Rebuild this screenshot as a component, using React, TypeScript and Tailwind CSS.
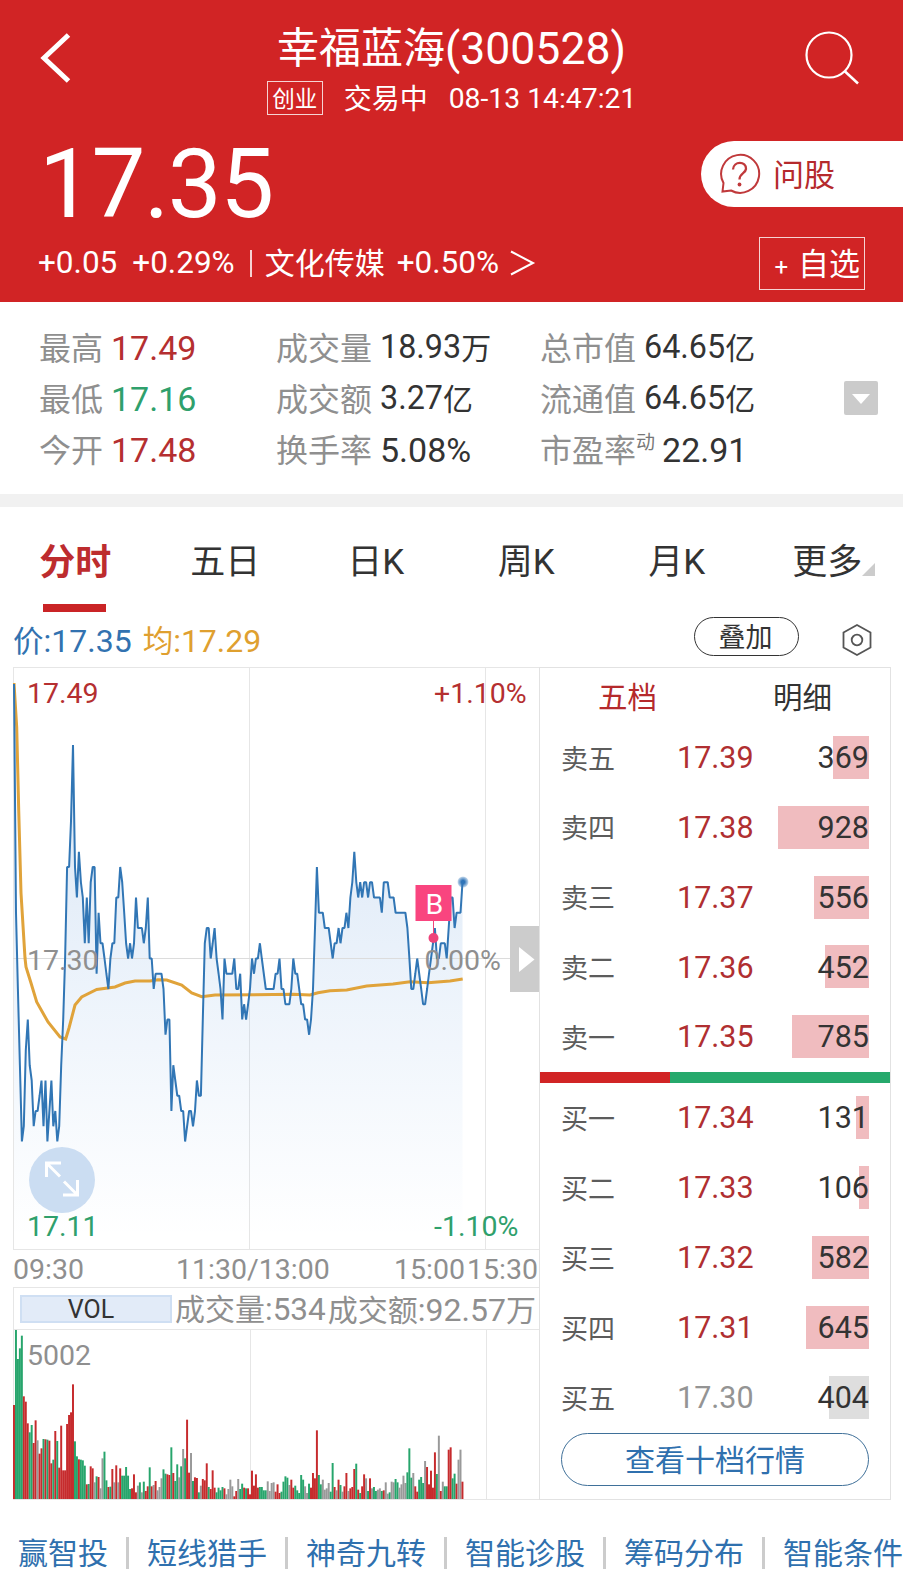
import React from "react";

type Level = {
  label: string;
  price: string;
  amount: number;
  flat?: boolean;
};

const sells: Level[] = [
  { label: "卖五", price: "17.39", amount: 369 },
  { label: "卖四", price: "17.38", amount: 928 },
  { label: "卖三", price: "17.37", amount: 556 },
  { label: "卖二", price: "17.36", amount: 452 },
  { label: "卖一", price: "17.35", amount: 785 },
];

const buys: Level[] = [
  { label: "买一", price: "17.34", amount: 131 },
  { label: "买二", price: "17.33", amount: 106 },
  { label: "买三", price: "17.32", amount: 582 },
  { label: "买四", price: "17.31", amount: 645 },
  { label: "买五", price: "17.30", amount: 404, flat: true },
];

const tabs = ["分时", "五日", "日K", "周K", "月K", "更多"];

const tools = [
  "赢智投",
  "短线猎手",
  "神奇九转",
  "智能诊股",
  "筹码分布",
  "智能条件",
];

// price per minute, in cents above or below the previous close (17.30)
const ticks = [
  18, 3, -2, -7, -12, -11, -6, -4, -7, -8, -11, -10, -10, -9, -8, -11, -8, -12,
  -10, -8, -11, -10, -12, -11, -7, -4, 0, 6, 6, 9, 14, 6, 4, 7, 5, 4, 1, 4, 1,
  5, 6, 6, -1, 3, 1, 1, 0, -1, -2, 0, 1, 1, 4, 4, 6, 5, 3, 1, 0, 1, 0, 1, 4, 2,
  2, 2, 1, 2, 4, 0, 0, -2, -1, -1, -1, -1, -2, -5, -4, -4, -10, -7, -8, -9, -9,
  -10, -10, -12, -11, -10, -10, -11, -10, -8, -9, -9, -4, 1, 2, 2, 0, 1, 2, 0,
  -1, -2, -4, 0, -1, -1, -1, -1, 0, -2, -2, -1, -4, -3, -4, -3, -2, 0, -1, 0, 0,
  1, 0, -1, -2, -2, -2, -2, -2, -1, -1, 0, -2, -2, -3, -3, -3, -2, 0, -1, -1,
  -2, -3, -3, -4, -4, -5, -4, -2, 2, 6, 3, 3, 3, 2, 2, 2, 1, 0, 1, 1, 2, 1, 2,
  2, 3, 2, 4, 5, 7, 5, 4, 5, 4, 5, 5, 4, 5, 5, 4, 4, 4, 4, 3, 5, 5, 5, 4, 4, 4,
  3, 3, 3, 3, 3, 3, 2, 0, -2, -2, -1, 0, -1, -2, -3, -3, -2, -1, 0, 1, 2, 0, 0,
  1, 1, 1, 0, 2, 4, 4, 2, 3, 3, 3, 5,
];

const average =
  "1,16 3.7,60 5.7,143 8,226 12,291 13,300 17.7,315 23.7,335 35,355 47,370 52.7,372 56,361 62,338 68.7,330 83.7,322.5 102,320 112,316 122,314 137,314 145,312.7 153.7,313 168.7,318 178.7,326 188.7,329.7 202,328 280,327.3 297,328 305,325.7 317,323.7 333.7,323 353.7,319 380,317 397,314.7 415,315.7 437,314 449.7,312";

// volume per minute: r = up, g = down, k = unchanged
const volumes =
  "282r 507g 420g 452g 490g 308r 292r 227r 200g 222g 168r 236r 176k 136r 152r 180g 179r 178g 175r 107r 118g 204r 174g 94r 220r 86r 86r 225r 252r 260r 344r 173g 128g 119r 118g 116g 100g 44r 45g 98r 92r 50k 68g 66r 32k 122k 142g 56g 36r 37g 90r 50k 101r 50k 92r 70g 70g 96g 70g 30g 32r 74r 20r 40k 50g 20k 52g 24r 38r 95g 38r 42k 54r 26k 36k 62k 89g 76g 74r 72r 155g 78r 54g 104g 65k 98g 150k 122g 238r 79r 138k 54g 65r 63r 20g 40k 60r 56r 107r 36g 30r 86r 34r 20g 34g 26g 36g 32r 14k 30k 58k 38k 8r 24r 60k 30g 46g 34r 32g 32r 14r 85r 40r 74r 34r 36g 36g 26g 26g 53k 24k 48k 50k 22r 44r 18r 22g 52g 68g 64g 42k 58r 34r 40g 26g 18g 72g 58g 38k 18k 46g 34r 78r 62r 206r 72g 44g 58k 28k 32k 48k 22g 108g 36r 26k 58r 42g 22k 38r 78r 24k 32r 36r 90r 106g 28r 18g 38r 74r 62k 24g 62r 32k 36g 24g 28k 32k 24g 26r 50k 16k 20g 52k 50k 60g 50g 34k 44k 70k 48k 80g 152g 64g 78k 38r 22r 58g 66g 48g 114k 96r 44r 85r 34r 140r 75g 190k 24r 52k 38g 38g 148r 155r 62g 76g 46r 118k 148k 52r".split(
    " "
  );

const volumeColor: Record<string, string> = {
  r: "#c62b2d",
  g: "#27a56c",
  k: "#999999",
};

const MINUTE = 1.967;

const Header = () => {
  return (
    <header className="h-[302px] bg-[#d12425] text-white">
      <div className="flex h-[122px] justify-between">
        <svg width="110" height="122" viewBox="0 0 110 122" fill="none">
          <path d="M68.500 35 L44 58 L68.500 81" stroke="white" strokeWidth="5" />
        </svg>
        <div className="flex flex-col items-center pt-[26px]">
          <h1 className="flex h-[46px] items-center text-[42px] leading-none whitespace-nowrap">
            幸福蓝海<span className="text-[44.5px]">(300528)</span>
          </h1>
          <div className="mt-[9px] flex h-[34px] items-center text-[28px] leading-none whitespace-nowrap">
            <span className="flex h-[34px] w-[56px] items-center justify-center border border-white/80 pt-[3px] text-[22.5px]">
              创业
            </span>
            <span className="mt-[3px] ml-[21px]">交易中</span>
            <span className="mt-[2px] ml-[21px] text-[28.3px]">
              08-13 14:47:21
            </span>
          </div>
        </div>
        <svg width="110" height="122" viewBox="0 0 110 122" fill="none">
          <circle cx="36" cy="55" r="22.500" stroke="white" strokeWidth="2.200" />
          <path d="M51.500 71 L65 83.500" stroke="white" strokeWidth="2.500" />
        </svg>
      </div>

      <div className="flex h-[108px] justify-between">
        <span className="pt-[14px] pl-[39px] text-[96px] leading-none tracking-[-1.5px]">
          17.35
        </span>
        <button className="mt-[19px] flex h-[66px] w-[202px] items-center rounded-l-full bg-white pl-[18px] text-[31px] leading-none text-[#b52a2c]">
          <svg width="42" height="42" viewBox="0 0 42 42" fill="none">
            <path
              d="M4.500 30 A19 19 0 1 1 12 37.500 L3.500 38.500 Z"
              stroke="#c0393b"
              strokeWidth="2"
            />
            <path
              d="M14 16.500 C14.500 7.500 27.500 8 27 16 C26.500 20.500 20.500 20 20.500 26.500"
              stroke="#c0393b"
              strokeWidth="2.300"
            />
            <circle cx="20.500" cy="31.500" r="1.900" fill="#c0393b" />
          </svg>
          <span className="mt-[3px] ml-[12px]">问股</span>
        </button>
      </div>

      <div className="flex h-[66px] items-center justify-between pr-[38px] pl-[38px] text-[31.5px] leading-none whitespace-nowrap">
        <div className="flex items-center">
          <span>+0.05</span>
          <span className="ml-[15px]">+0.29%</span>
          <span className="ml-[15px] h-[27px] w-[2px] bg-white/80" />
          <span className="mt-[2px] ml-[13px] text-[30px]">文化传媒</span>
          <span className="ml-[12px]">+0.50%</span>
          <svg className="ml-[11px]" width="26" height="28" fill="none">
            <path d="M1 2.500 L23 14 L1 25.500" stroke="white" strokeWidth="2" />
          </svg>
        </div>
        <button className="flex h-[53px] w-[106px] items-center justify-end border border-white/80 pr-[4px] text-[31px]">
          <span className="mt-[8px] mr-[10px] text-[24px]">+</span>
          <span className="mt-[2px]">自选</span>
        </button>
      </div>
    </header>
  );
};

type StatProps = {
  label: string;
  value: string;
  unit?: string;
  mark?: string;
  color?: string;
};

const Stat = ({ label, value, unit, mark, color }: StatProps) => {
  return (
    <div className="flex h-[51px] items-center whitespace-nowrap">
      <span className="mt-[2px] text-[32px] text-[#8f8f8f]">{label}</span>
      {mark && (
        <span className="mb-[15px] -mr-[1px] text-[19px] text-[#777]">
          {mark}
        </span>
      )}
      {unit ? (
        <>
          <span className="ml-[8px] text-[32.3px] text-[#333]">{value}</span>
          <span className="mt-[2px] text-[30px] text-[#333]">{unit}</span>
        </>
      ) : (
        <span className={`ml-[8px] text-[34px] ${color ?? "text-[#333]"}`}>
          {value}
        </span>
      )}
    </div>
  );
};

const Stats = () => {
  return (
    <section className="flex h-[192px] pt-[20px] pl-[39px] leading-none">
      <div className="w-[237px]">
        <Stat label="最高" value="17.49" color="text-[#b52f30]" />
        <Stat label="最低" value="17.16" color="text-[#2fa06c]" />
        <Stat label="今开" value="17.48" color="text-[#b52f30]" />
      </div>
      <div className="w-[264px]">
        <Stat label="成交量" value="18.93" unit="万" />
        <Stat label="成交额" value="3.27" unit="亿" />
        <Stat label="换手率" value="5.08%" />
      </div>
      <div className="w-[304px]">
        <Stat label="总市值" value="64.65" unit="亿" />
        <Stat label="流通值" value="64.65" unit="亿" />
        <Stat label="市盈率" mark="动" value="22.91" />
      </div>
      <button className="mt-[59px] h-[34px] w-[34px] rounded-[2px] bg-[#cbcbcb]">
        <svg width="34" height="34" viewBox="0 0 34 34">
          <path d="M8 13 H26 L17 23 Z" fill="white" />
        </svg>
      </button>
    </section>
  );
};

const Tabs = () => {
  return (
    <nav className="flex h-[105px] text-[35px] leading-none text-[#333]">
      {tabs.map((tab, i) => (
        <div
          key={tab}
          className="flex flex-1 flex-col items-center justify-between pt-[38px]"
        >
          {i === 0 ? (
            <>
              <span className="text-[36px] font-bold text-[#bd2c2e]">
                {tab}
              </span>
              <span className="mr-[2px] h-[8px] w-[63px] bg-[#ca2426]" />
            </>
          ) : (
            <span className="relative -ml-[1px]">
              {tab}
              {tab === "更多" && (
                <svg
                  className="absolute right-[-13px] bottom-[4px]"
                  width="13"
                  height="13"
                >
                  <path d="M13 0 V13 H0 Z" fill="#cccccc" />
                </svg>
              )}
            </span>
          )}
        </div>
      ))}
    </nav>
  );
};

const PriceBar = () => {
  return (
    <div className="flex h-[55px] items-center pr-[31px] pl-[13px] text-[30.5px] leading-none">
      <span className="mt-[3px] text-[#3272b0]">
        价<span className="text-[32px]">:17.35</span>
      </span>
      <span className="mt-[3px] ml-[11px] text-[#dfa02f]">
        均<span className="text-[32px]">:17.29</span>
      </span>
      <button className="mr-[43px] mb-[6px] ml-auto flex h-[39px] w-[105px] items-center justify-center rounded-full border border-[#333] pt-[4px] pr-[2px] text-[27px] text-[#333]">
        叠加
      </button>
      <svg width="30" height="34" viewBox="0 0 30 34" fill="none">
        <path
          d="M15 2 L28.500 9.500 V24.500 L15 32 L1.500 24.500 V9.500 Z"
          stroke="#555"
          strokeWidth="1.800"
        />
        <circle cx="15" cy="17" r="5.300" stroke="#555" strokeWidth="1.800" />
      </svg>
    </div>
  );
};

const PriceChart = () => {
  const points = ticks
    .map((t, i) => `${(1 + i * MINUTE).toFixed(1)},${291.5 - t * 15.25}`)
    .join(" ");

  return (
    <svg
      width="526"
      height="583"
      viewBox="0 0 526 583"
      fill="none"
      className="block text-[28.5px]"
    >
      <defs>
        <linearGradient
          id="area"
          gradientUnits="userSpaceOnUse"
          x1="0"
          y1="16"
          x2="0"
          y2="570"
        >
          <stop offset="0" stopColor="#3a7cc8" stopOpacity="0.22" />
          <stop offset="1" stopColor="#4a90e0" stopOpacity="0" />
        </linearGradient>
        <radialGradient id="pulse">
          <stop offset="0.3" stopColor="#2f74b8" />
          <stop offset="1" stopColor="#2f74b8" stopOpacity="0.25" />
        </radialGradient>
      </defs>
      <path d="M0 0.500 H526 M0 582.500 H526 M0.500 0 V583" stroke="#e6e6e6" />
      <path d="M236.500 0 V583 M472.500 0 V583" stroke="#e6e6e6" />
      <polygon points={`1,582 ${points} 449.5,582`} fill="url(#area)" />
      <path d="M0 291.500 H526" stroke="#dcdcdc" />
      <polyline points={average} stroke="#e0a33a" strokeWidth="3" />
      <polyline
        points={points}
        stroke="#3176b5"
        strokeWidth="2"
        strokeLinejoin="bevel"
      />
      <circle cx="450" cy="215" r="5.500" fill="url(#pulse)" />

      <path d="M420.500 254 V270" stroke="#f0437a" />
      <circle cx="420.500" cy="271" r="5" fill="#ee437a" />
      <rect x="402.500" y="218" width="36" height="36" fill="#f9457f" />
      <text x="421.500" y="247" fill="white" textAnchor="middle">
        B
      </text>

      <text x="14" y="36" fill="#b52f30">
        17.49
      </text>
      <text x="14" y="303" fill="#8f8f8f">
        17.30
      </text>
      <text x="14" y="569" fill="#2fa06c">
        17.11
      </text>
      <text x="421" y="36" fill="#b52f30">
        +1.10%
      </text>
      <text x="411.500" y="303" fill="#8f8f8f">
        0.00%
      </text>
      <text x="421" y="569" fill="#2fa06c">
        -1.10%
      </text>

      <circle cx="49" cy="513" r="33" fill="#cbddf2" />
      <path
        d="M33.500 510 V496 H48 M33.500 496 L47 509.500 M51 514.500 L64.500 528 M64.500 513 V528 H50"
        stroke="white"
        strokeWidth="3"
      />

      <rect x="497" y="259" width="29" height="66" fill="#cccccc" />
      <path d="M506 280 L521.500 292.500 L506 305 Z" fill="white" />
    </svg>
  );
};

const VolumeChart = () => {
  return (
    <svg width="526" height="171" viewBox="0 0 526 171" className="block">
      <path
        d="M0 0.500 H526 M0 170.500 H526 M0.500 0 V171 M237.500 0 V171 M473.500 0 V171"
        stroke="#e6e6e6"
      />
      {volumes.map((v, i) => {
        const height = parseInt(v) / 3;
        return (
          <rect
            key={i}
            x={i * MINUTE}
            y={170 - height}
            width={MINUTE}
            height={height}
            fill={volumeColor[v.slice(-1)]}
          />
        );
      })}
      <text x="14" y="36" fontSize="28.500" fill="#8f8f8f">
        5002
      </text>
    </svg>
  );
};

const Charts = () => {
  return (
    <div className="w-[526px] leading-none whitespace-nowrap text-[#8f8f8f]">
      <PriceChart />
      <div className="flex h-[37px] items-center pt-[3px] text-[28.5px]">
        <span className="w-[163px]">09:30</span>
        <span className="w-[218px]">11:30/13:00</span>
        <span className="w-[73px]">15:00</span>
        <span>15:30</span>
      </div>
      <div className="flex h-[42px] items-center border-t border-l border-[#e6e6e6] pl-[6px] text-[30px]">
        <div className="flex h-[28px] w-[152px] items-center justify-center border-2 border-[#cfdff3] bg-[#e2ebf8] pt-[2px] pr-[10px] text-[25px] text-[#333]">
          VOL
        </div>
        <span className="mt-[2px] ml-[3px]">
          成交量<span className="text-[31.5px]">:534</span>
        </span>
        <span className="mt-[2px] ml-[2px]">
          成交额<span className="text-[32px]">:92.57</span>万
        </span>
      </div>
      <VolumeChart />
    </div>
  );
};

const LevelRow = ({ label, price, amount, flat }: Level) => {
  return (
    <div className="flex h-[43px] items-center pr-[21px] pl-[21px] text-[30.5px]">
      <span className="mt-[5px] w-[116px] text-[27px] text-[#5c5c5c]">
        {label}
      </span>
      <span
        className={`mt-[2px] ${flat ? "text-[#949494]" : "text-[#b02f31]"}`}
      >
        {price}
      </span>
      <span className="relative ml-auto flex h-[43px] items-center text-[#333]">
        <span
          className={`absolute right-0 h-full ${
            flat ? "bg-[#dedede]" : "bg-[#f0bcbf]"
          }`}
          style={{ width: amount * 0.0981 }}
        />
        <span className="relative mt-[2px]">{amount}</span>
      </span>
    </div>
  );
};

const OrderBook = () => {
  return (
    <div className="flex w-[352px] flex-col border border-[#e2e2e2] leading-none">
      <div className="flex h-[58px] items-center pt-[3px] text-center text-[29.5px]">
        <span className="flex-1 text-[#b52a2c]">五档</span>
        <span className="flex-1 text-[#333]">明细</span>
      </div>
      <div className="mt-[10px] flex flex-col gap-[26.75px]">
        {sells.map((level) => (
          <LevelRow key={level.label} {...level} />
        ))}
      </div>
      <div className="mt-[14px] flex h-[11px]">
        <span className="w-[130px] bg-[#d12425]" />
        <span className="flex-1 bg-[#26a96c]" />
      </div>
      <div className="mt-[13px] flex flex-col gap-[27px]">
        {buys.map((level) => (
          <LevelRow key={level.label} {...level} />
        ))}
      </div>
      <button className="mx-[21px] mt-[14px] flex h-[53px] items-center justify-center rounded-full border border-[#3f7099] pt-[3px] text-[30px] text-[#2f70ae]">
        查看十档行情
      </button>
    </div>
  );
};

const App = () => {
  return (
    <main className="h-[1587px] w-[903px] overflow-hidden bg-white font-['Roboto','Noto_Sans_CJK_SC',sans-serif]">
      <Header />
      <Stats />
      <div className="h-[13px] bg-[#f1f1f1]" />
      <Tabs />
      <PriceBar />
      <section className="flex h-[833px] pl-[13px]">
        <Charts />
        <OrderBook />
      </section>
      <footer className="flex h-[87px] items-center pt-[18px] pl-[18px] text-[30px] leading-none whitespace-nowrap text-[#2f70ae]">
        {tools.map((tool, i) => (
          <React.Fragment key={tool}>
            {i > 0 && (
              <span className="mx-[18px] h-[32px] w-[3px] shrink-0 bg-[#cccccc]" />
            )}
            <span className="mt-[3px] shrink-0">{tool}</span>
          </React.Fragment>
        ))}
      </footer>
    </main>
  );
};

export default App;
